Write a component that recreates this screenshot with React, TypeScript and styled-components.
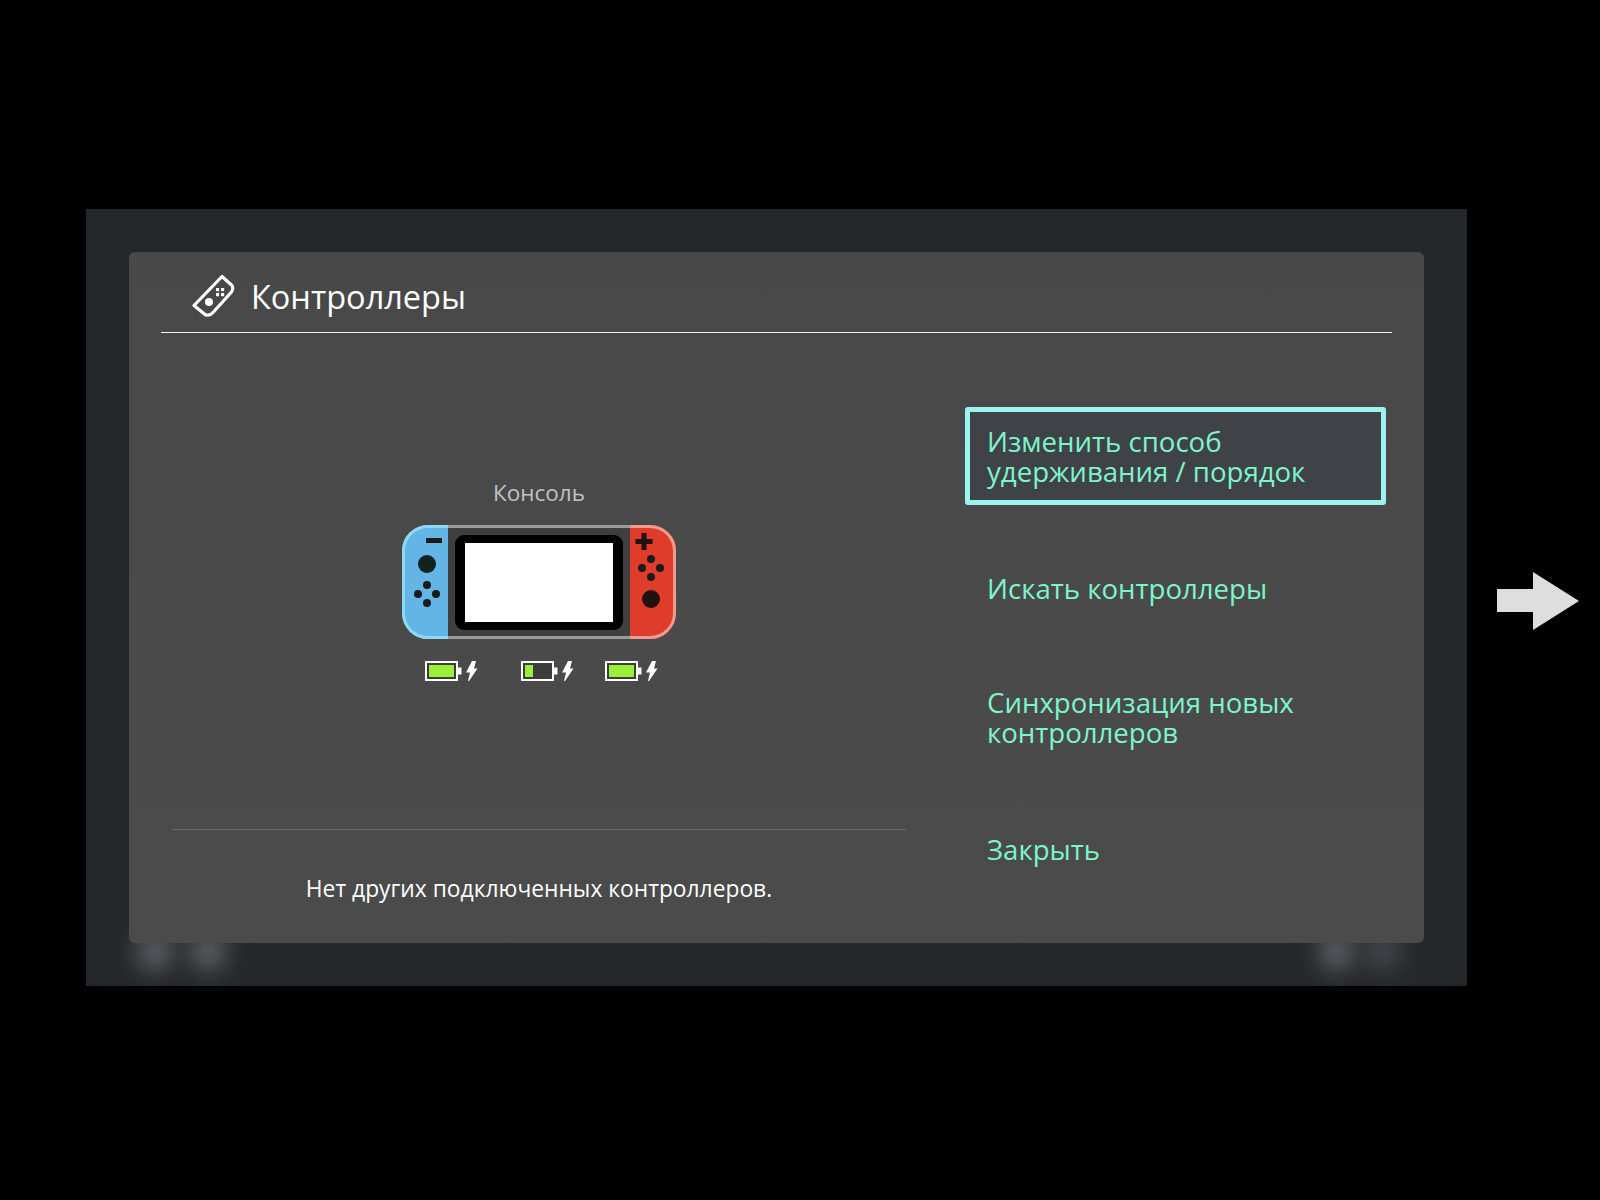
import React from 'react';
import styled, { createGlobalStyle } from 'styled-components';

const Global = createGlobalStyle`
  html, body { margin: 0; padding: 0; background: #000; }
  body { font-family: "Open Sans", "Noto Sans", sans-serif; }
`;

const Stage = styled.div`
  width: 1600px;
  height: 1200px;
  background: #000;
  display: flex;
  align-items: flex-start;
  padding: 209px 0 0 86px;
  box-sizing: border-box;
  overflow: hidden;
`;

const Backdrop = styled.div`
  position: relative;
  width: 1381px;
  height: 777px;
  flex: none;
  background: #25282a;
  padding: 43px;
  box-sizing: border-box;
`;

const Glow = styled.span<{ $left: number; $strong?: boolean }>`
  position: absolute;
  left: ${p => p.$left}px;
  top: 722px;
  width: 36px;
  height: 40px;
  border-radius: 50%;
  background: ${p => (p.$strong ? '#5f6267' : '#46494e')};
  filter: blur(12px);
`;

const Card = styled.section`
  position: relative;
  height: 691px;
  background: linear-gradient(#484848, #4b4b4b);
  border-radius: 6px;
  display: flex;
  flex-direction: column;
  padding: 0 32px;
  box-sizing: border-box;
`;

const Header = styled.header`
  height: 81px;
  flex: none;
  display: flex;
  align-items: center;
  gap: 16px;
  padding: 8px 0 0 30px;
  border-bottom: 1px solid #f2f2f2;
  box-sizing: border-box;
`;

const Title = styled.h1`
  margin: 0;
  font-size: 32.5px;
  font-weight: 400;
  color: #fff;
`;

const Body = styled.div`
  flex: 1;
  display: flex;
  margin: 0 -32px;
`;

const LeftPane = styled.div`
  width: 810px;
  flex: none;
  display: flex;
  flex-direction: column;
  padding: 0 33px 0 43px;
  box-sizing: border-box;
`;

const ConsoleArea = styled.div`
  height: 496px;
  flex: none;
  padding-top: 144px;
  display: flex;
  flex-direction: column;
  align-items: center;
  box-sizing: border-box;
`;

const ConsoleLabel = styled.div`
  font-size: 22.5px;
  line-height: 32px;
  color: #c2c2c2;
`;

const ConsoleImage = styled.svg`
  display: block;
  margin-top: 16px;
`;

const Batteries = styled.div`
  display: flex;
  align-items: center;
  width: 238px;
  margin-top: 22px;
  padding-left: 5px;
  box-sizing: border-box;
`;

const BatteryIcon = styled.svg<{ $gap: number }>`
  display: block;
  flex: none;
  margin-right: ${p => p.$gap}px;
`;

const Footer = styled.div`
  flex: 1;
  border-top: 1px solid #6a6a6a;
  display: flex;
  justify-content: center;
  padding-top: 43px;
  font-size: 22.8px;
  line-height: 32px;
  color: #fff;
`;

const Menu = styled.nav`
  flex: 1;
  display: flex;
  flex-direction: column;
  padding: 74px 38px 0 26px;
`;

const MenuItem = styled.div<{ $focused?: boolean; $gap?: number }>`
  height: 98px;
  flex: none;
  margin-top: ${p => p.$gap ?? 0}px;
  display: flex;
  align-items: center;
  padding: 0 17px;
  box-sizing: border-box;
  font-size: 27.6px;
  line-height: 30px;
  color: #7df5cb;
  border-radius: 3px;
  border: 5px solid ${p => (p.$focused ? '#9df3ef' : 'transparent')};
  background: ${p => (p.$focused ? '#3f4246' : 'transparent')};
`;

const Arrow = styled.svg`
  display: block;
  flex: none;
  margin: 363px 0 0 30px;
  filter: blur(0.6px);
`;

const ControllerIcon = () => (
  <svg width="44" height="44" viewBox="0 0 44 44" fill="none" aria-hidden="true">
    <path
      d="M31 2.5 L40.5 11 Q43 14 40.5 18 L22 38.5 Q18.5 42.5 14 40.5 L3 31.5 Z"
      stroke="#fff"
      strokeWidth="3.2"
      strokeLinejoin="round"
    />
    <circle cx="18" cy="28" r="4" fill="#fff" />
    <g fill="#fff">
      <rect x="25" y="14" width="3.2" height="3.2" rx=".6" />
      <rect x="30" y="14" width="3.2" height="3.2" rx=".6" />
      <rect x="25" y="19" width="3.2" height="3.2" rx=".6" />
      <rect x="30" y="19" width="3.2" height="3.2" rx=".6" />
    </g>
  </svg>
);

const Dots = ({ cx, cy }: { cx: number; cy: number }) => (
  <g fill="#1a1a1a">
    <circle cx={cx} cy={cy - 9} r="4" />
    <circle cx={cx} cy={cy + 9} r="4" />
    <circle cx={cx - 9} cy={cy} r="4" />
    <circle cx={cx + 9} cy={cy} r="4" />
  </g>
);

const ConsoleDrawing = () => (
  <ConsoleImage width="274" height="114" viewBox="0 0 274 114" aria-hidden="true">
    <rect x="46" y="0" width="182" height="114" fill="#3f3f3f" />
    <rect x="46" y="0" width="182" height="3" fill="#9a9a9a" />
    <rect x="46" y="111" width="182" height="3" fill="#9a9a9a" />
    <path d="M46 0 H26 A26 26 0 0 0 0 26 V88 A26 26 0 0 0 26 114 H46 Z" fill="#62b5e5" />
    <path d="M46 1.5 H26 A24.5 24.5 0 0 0 1.5 26 V88 A24.5 24.5 0 0 0 26 112.5 H46" fill="none" stroke="#8fd8f2" strokeWidth="3" />
    <path d="M228 0 H248 A26 26 0 0 1 274 26 V88 A26 26 0 0 1 248 114 H228 Z" fill="#e03c2c" />
    <path d="M228 1.5 H248 A24.5 24.5 0 0 1 272.5 26 V88 A24.5 24.5 0 0 1 248 112.5 H228" fill="none" stroke="#f09a90" strokeWidth="3" />
    <rect x="53" y="10" width="168" height="95" rx="9" fill="#000" />
    <rect x="63" y="18" width="148" height="79" fill="#fff" />
    <rect x="24" y="13" width="16" height="5" fill="#1a1a1a" />
    <circle cx="25" cy="39" r="9" fill="#13211f" />
    <Dots cx={25} cy={69} />
    <path d="M239.5 8 h5 v6 h6 v5 h-6 v6 h-5 v-6 h-6 v-5 h6 z" fill="#1f1210" />
    <Dots cx={249} cy={43} />
    <circle cx="249" cy="74" r="9" fill="#1f1210" />
  </ConsoleImage>
);

const Battery = ({ level, gap }: { level: number; gap: number }) => (
  <BatteryIcon $gap={gap} width="54" height="20" viewBox="0 0 54 20" aria-hidden="true">
    <rect x="1" y="1" width="31" height="18" fill="#3c3c3c" stroke="#fff" strokeWidth="2" />
    <rect x="33" y="6.5" width="3.5" height="7" fill="#fff" />
    <rect x="4" y="4" width={level} height="12" fill="#9bef38" />
    <path d="M47 0 H51 L49 7.5 H52.5 L44 20 H43 L45 11.5 H41 Z" fill="#fff" />
  </BatteryIcon>
);

export default function App() {
  return (
    <Stage>
      <Global />
      <Backdrop>
        <Glow $left={51} $strong />
        <Glow $left={104} $strong />
        <Glow $left={1233} $strong />
        <Glow $left={1279} />
        <Card>
          <Header>
            <ControllerIcon />
            <Title>Контроллеры</Title>
          </Header>
          <Body>
            <LeftPane>
              <ConsoleArea>
                <ConsoleLabel>Консоль</ConsoleLabel>
                <ConsoleDrawing />
                <Batteries>
                  <Battery level={25} gap={42} />
                  <Battery level={8} gap={30} />
                  <Battery level={25} gap={0} />
                </Batteries>
              </ConsoleArea>
              <Footer>Нет других подключенных контроллеров.</Footer>
            </LeftPane>
            <Menu>
              <MenuItem $focused>Изменить способ<br />удерживания / порядок</MenuItem>
              <MenuItem $gap={34}>Искать контроллеры</MenuItem>
              <MenuItem $gap={31}>Синхронизация новых<br />контроллеров</MenuItem>
              <MenuItem $gap={34}>Закрыть</MenuItem>
            </Menu>
          </Body>
        </Card>
      </Backdrop>
      <Arrow width="82" height="58" viewBox="0 0 82 58" aria-hidden="true">
        <path d="M0 17 H36 V0 L82 29 L36 58 V40 H0 Z" fill="#dedede" />
      </Arrow>
    </Stage>
  );
}
